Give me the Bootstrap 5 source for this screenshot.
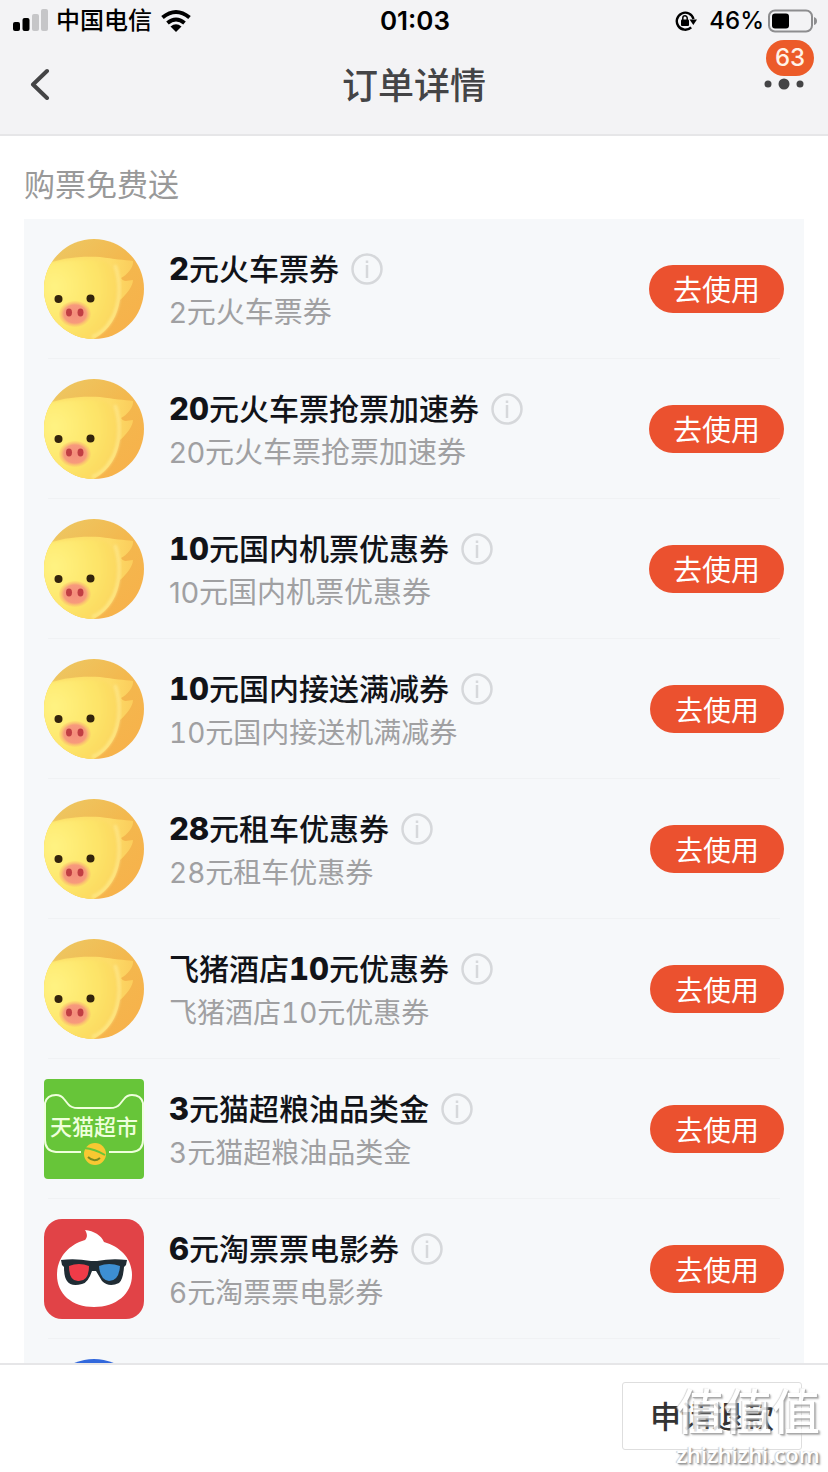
<!DOCTYPE html>
<html lang="zh-CN">
<head>
<meta charset="utf-8">
<meta name="viewport" content="width=device-width, initial-scale=1">
<title>订单详情</title>
<link rel="stylesheet" href="https://cdn.jsdelivr.net/npm/bootstrap@5.3.0/dist/css/bootstrap.min.css">
<style>
body { font-family: Inter, "Noto Sans CJK SC", sans-serif; color: #111318; }
.top-area { background: #f3f3f5; border-bottom: 2px solid #e6e6e8; }
.status-bar { height: 42px; padding: 0 11px 0 13px; font-size: 24px; color: #000; }
.status-bar > * { flex: 1 1 0; font-weight: 500; }
.status-bar .clock { font-size: 26px; line-height: 42px; font-weight: 600; }
.nav-bar { height: 92px; padding: 0 24px 8px; color: #444446; }
.nav-bar h1 { font-size: 36px; font-weight: 500; padding-top: 6px; }
.icon-btn { width: 40px; height: 40px; color: inherit; }
.count-badge { right: -10px; top: -24px; height: 36px; width: 48px; font-size: 24px; font-weight: 500; background: #ec5b29; color: #fff3e8; z-index: 1; }
.content-area { min-height: 0; }
.section-title { font-size: 31px; line-height: 36px; color: #999; padding: 31px 0 16px; }
.coupon-list { background: #f6f8fa; }
.coupon { padding: 20px 20px 0; }
.coupon::after { content: ""; display: block; height: 1px; margin: 19px 4px 0; background: #f0f2f4; }
.coupon-text { padding-top: 4px; }
.coupon h3 { font-size: 30px; line-height: 44px; font-weight: 500; }
.coupon h3 b { font-size: 31px; line-height: 1; font-weight: 800; font-variant-numeric: tabular-nums; }
.coupon p { font-size: 29px; line-height: 44px; color: #a0a0a2; }
.logo { width: 100px; height: 100px; margin-right: 25px; }
.logo text { font-family: "Noto Sans CJK SC", sans-serif; }
.info { width: 32px; height: 32px; margin-left: 12px; }
.use-btn { --bs-btn-bg: #eb512f; --bs-btn-color: #fff; --bs-btn-hover-bg: #d94525; --bs-btn-hover-color: #fff; height: 48px; padding: 4px 24px 0; font-size: 29px; line-height: 44px; border: 0; }
.compact p { font-size: 28px; font-variant-numeric: tabular-nums; }
.compact .use-btn { font-size: 28px; padding: 4px 25px 0; }
.action-bar { height: 109px; border-top: 2px solid #e6e6e8; padding-right: 26px; padding-bottom: 6px; }
.refund-btn { --bs-btn-border-color: #dedede; width: 180px; height: 68px; padding: 4px 0 0; font-size: 31px; font-weight: 500; border-radius: 3px; color: #333; }
.watermark { right: 8px; bottom: 4px; color: #fff; pointer-events: none; text-shadow: 1px 1px 1px #999, 2px 2px 2px #aaa, -1px 0 1px #ccc; }
.watermark-name { font-size: 48px; line-height: 56px; font-weight: 500; opacity: .85; }
.watermark-site { font-family: "Open Sans", sans-serif; font-size: 22px; line-height: 28px; font-weight: 600; }
</style>
</head>
<body class="bg-white">
<svg class="position-absolute" width="0" height="0" aria-hidden="true">
  <defs>
    <linearGradient id="sky" x1="0" y1="0" x2="1" y2="1"><stop offset="0" stop-color="#ecca66"/><stop offset=".5" stop-color="#f3b84e"/><stop offset="1" stop-color="#f8b04a"/></linearGradient>
    <radialGradient id="face" cx=".25" cy=".3" r=".85"><stop offset="0" stop-color="#fff382"/><stop offset=".6" stop-color="#fde468"/><stop offset="1" stop-color="#fbd45e"/></radialGradient>
    <linearGradient id="ear" x1="0" y1="0" x2="1" y2="0"><stop offset="0" stop-color="#fde268"/><stop offset=".75" stop-color="#fddc68"/><stop offset="1" stop-color="#fbcd5c"/></linearGradient>
    <radialGradient id="snout"><stop offset="0" stop-color="#f58d7d"/><stop offset=".7" stop-color="#f79a7c"/><stop offset="1" stop-color="#fbc86a" stop-opacity=".3"/></radialGradient>
    <clipPath id="disc"><circle cx="50" cy="50" r="50"/></clipPath>
    <filter id="soft"><feGaussianBlur stdDeviation="1.5"/></filter>
  </defs>
  <symbol id="pig" viewBox="0 0 100 100">
    <g clip-path="url(#disc)">
      <rect width="100" height="100" fill="url(#sky)"/>
      <path d="M-2 29C10 19 36 17 56 18 70 20 80 21 89 22 90 28 83 36 77 39 80 44 84 41 89 41 89 47 82 56 76 61 73 78 66 92 46 102L-4 102Z" fill="url(#ear)"/>
      <path d="M-10 27C18 20 52 18 63 24 72 30 75 45 72 61 70 79 59 94 44 103L-10 110Z" fill="url(#face)" filter="url(#soft)"/>
      <path d="M71 26C77 42 77 65 68 80 63 89 56 95 48 98" fill="none" stroke="#fff09b" stroke-width="3" opacity=".65" filter="url(#soft)"/>
      <ellipse cx="31" cy="75" rx="16" ry="13" fill="url(#snout)"/>
      <ellipse cx="25" cy="73.500" rx="3" ry="4" fill="#c13e43"/><ellipse cx="36.500" cy="73.500" rx="3" ry="4" fill="#c13e43"/>
      <circle cx="14.500" cy="60" r="4" fill="#33240c"/><circle cx="46.500" cy="59.500" r="4" fill="#33240c"/>
    </g>
  </symbol>
  <symbol id="info" viewBox="0 0 32 32">
    <g fill="none" stroke="#d6d8db" stroke-width="2.500"><circle cx="16" cy="16" r="14.500"/><path d="M16 12V25M16 7.500V10"/></g>
  </symbol>
</svg>

<div class="d-flex flex-column vh-100 overflow-hidden position-relative">
  <header class="top-area flex-shrink-0">
    <div class="status-bar d-flex align-items-center">
      <div class="d-flex align-items-center">
        <svg class="me-2" width="35" height="24" viewBox="0 0 35 24" aria-label="信号"><rect y="13" width="7" height="9" rx="2"/><rect x="9.500" y="9" width="7" height="13" rx="2"/><rect x="19" y="5" width="7" height="17" rx="2" fill="#c6c6c8"/><rect x="28" width="7" height="22" rx="2" fill="#c6c6c8"/></svg>
        <span>中国电信</span>
        <svg class="ms-2" width="32" height="24" viewBox="0 0 32 24" aria-label="无线网络"><g fill="none" stroke="#000" stroke-width="4"><path d="M2.500 8.500Q16-2.500 29.500 8.500"/><path d="M7.500 14Q16 7 24.500 14"/></g><path d="M10.500 17.500Q16 13 21.500 17.500L16 23Z"/></svg>
      </div>
      <div class="clock text-center">01:03</div>
      <div class="d-flex align-items-center justify-content-end">
        <svg width="22" height="22" viewBox="0 0 22 22" aria-label="方向锁定"><path d="M16.200 17.300A8.500 8.500 0 1 1 18.500 9" fill="none" stroke="#000" stroke-width="2.400"/><path d="M14.500 9.500H22L18.300 15Z"/><rect x="6" y="9.500" width="8" height="6.500" rx="1"/><path d="M7.800 10V8a2.200 2.200 0 0 1 4.400 0V10" fill="none" stroke="#000" stroke-width="1.500"/></svg>
        <span class="ms-2 ps-1">46%</span>
        <svg class="ms-1" width="49" height="24" viewBox="0 0 49 24" aria-label="电量"><rect x="1" y="1.500" width="43" height="21" rx="6" fill="none" stroke="#8d8d8f" stroke-width="2"/><rect x="4" y="4.500" width="17" height="15" rx="3"/><path d="M46 8q3 1 3 4t-3 4Z" fill="#8d8d8f"/></svg>
      </div>
    </div>
    <nav class="nav-bar d-flex align-items-center justify-content-between" aria-label="页面导航">
      <button class="btn icon-btn border-0 p-0 d-flex align-items-center" type="button" aria-label="返回">
        <svg width="32" height="32" viewBox="0 0 32 32" fill="none" stroke="currentColor" stroke-width="4" stroke-linecap="round" stroke-linejoin="round"><path d="M23 3 9 16.500 23 30"/></svg>
      </button>
      <h1 class="m-0">订单详情</h1>
      <button class="btn icon-btn border-0 p-0 position-relative d-flex align-items-center justify-content-center" type="button" aria-label="更多，63条消息">
        <svg width="40" height="14" viewBox="0 0 40 14" fill="currentColor"><circle cx="4" cy="7" r="3.500"/><circle cx="20" cy="7" r="5.500"/><circle cx="36" cy="7" r="3.500"/></svg>
        <span class="count-badge position-absolute rounded-pill d-flex align-items-center justify-content-center">63</span>
      </button>
    </nav>
  </header>

  <main class="content-area flex-fill overflow-hidden px-4">
    <h2 class="section-title m-0 fw-normal">购票免费送</h2>
    <ul class="coupon-list list-unstyled m-0">
      <li class="coupon"><div class="d-flex align-items-center"><svg class="logo flex-shrink-0"><use href="#pig"/></svg><div class="coupon-text flex-fill"><div class="d-flex align-items-center"><h3 class="m-0"><b>2</b>元火车票券</h3><svg class="info"><use href="#info"/></svg></div><p class="m-0">2元火车票券</p></div><button type="button" class="btn use-btn rounded-pill">去使用</button></div></li>
      <li class="coupon"><div class="d-flex align-items-center"><svg class="logo flex-shrink-0"><use href="#pig"/></svg><div class="coupon-text flex-fill"><div class="d-flex align-items-center"><h3 class="m-0"><b>20</b>元火车票抢票加速券</h3><svg class="info"><use href="#info"/></svg></div><p class="m-0">20元火车票抢票加速券</p></div><button type="button" class="btn use-btn rounded-pill">去使用</button></div></li>
      <li class="coupon"><div class="d-flex align-items-center"><svg class="logo flex-shrink-0"><use href="#pig"/></svg><div class="coupon-text flex-fill"><div class="d-flex align-items-center"><h3 class="m-0"><b>10</b>元国内机票优惠券</h3><svg class="info"><use href="#info"/></svg></div><p class="m-0">10元国内机票优惠券</p></div><button type="button" class="btn use-btn rounded-pill">去使用</button></div></li>
      <li class="coupon compact"><div class="d-flex align-items-center"><svg class="logo flex-shrink-0"><use href="#pig"/></svg><div class="coupon-text flex-fill"><div class="d-flex align-items-center"><h3 class="m-0"><b>10</b>元国内接送满减券</h3><svg class="info"><use href="#info"/></svg></div><p class="m-0">10元国内接送机满减券</p></div><button type="button" class="btn use-btn rounded-pill">去使用</button></div></li>
      <li class="coupon compact"><div class="d-flex align-items-center"><svg class="logo flex-shrink-0"><use href="#pig"/></svg><div class="coupon-text flex-fill"><div class="d-flex align-items-center"><h3 class="m-0"><b>28</b>元租车优惠券</h3><svg class="info"><use href="#info"/></svg></div><p class="m-0">28元租车优惠券</p></div><button type="button" class="btn use-btn rounded-pill">去使用</button></div></li>
      <li class="coupon compact"><div class="d-flex align-items-center"><svg class="logo flex-shrink-0"><use href="#pig"/></svg><div class="coupon-text flex-fill"><div class="d-flex align-items-center"><h3 class="m-0">飞猪酒店<b>10</b>元优惠券</h3><svg class="info"><use href="#info"/></svg></div><p class="m-0">飞猪酒店10元优惠券</p></div><button type="button" class="btn use-btn rounded-pill">去使用</button></div></li>
      <li class="coupon compact"><div class="d-flex align-items-center">
        <svg class="logo flex-shrink-0" viewBox="0 0 100 100"><rect width="100" height="100" rx="4" fill="#67c539"/><path d="M37 73H12Q1 72 1 61V24Q3 16 12 16 17 16 20 20L24 25Q27 29 34 29H66Q73 29 76 25L80 20Q83 16 88 16 97 16 99 24V61Q99 72 88 73H65" fill="none" stroke="#efffdc" stroke-width="2"/><text x="50" y="56" text-anchor="middle" font-size="22" font-weight="500" fill="#efffdc">天猫超市</text><circle cx="51" cy="75" r="11" fill="#f8c832"/><path d="M40 69Q51 70 61 76" fill="none" stroke="#67c539" stroke-width="2"/><path d="M44 78Q50 84 56 79" fill="none" stroke="#7a8a20" stroke-width="2"/></svg>
        <div class="coupon-text flex-fill"><div class="d-flex align-items-center"><h3 class="m-0"><b>3</b>元猫超粮油品类金</h3><svg class="info"><use href="#info"/></svg></div><p class="m-0">3元猫超粮油品类金</p></div><button type="button" class="btn use-btn rounded-pill">去使用</button></div></li>
      <li class="coupon compact"><div class="d-flex align-items-center">
        <svg class="logo flex-shrink-0" viewBox="0 0 100 100"><rect width="100" height="100" rx="18" fill="#e14347"/><path d="M41 21C44 18 43 14 41 11 50 12 57 16 60 23 77 28 88 40 88 56 88 75 72 88 50 88 28 88 13 75 13 56 13 39 24 26 41 21Z" fill="#fff"/><path d="M17 41Q31 39 47 42H53Q68 39 83 41L82 46 80 48Q79 61 75 64 65 69 58 62L52 52H48Q44 64 38 65 27 68 23 62 20 58 20 48L18 46Z" fill="#202c34"/><path d="M25 47Q35 43 45 47 45 62 35 62 25 63 25 47Z" fill="#ef3b48"/><path d="M55 47Q65 43 76 47 75 62 65 62 56 61 55 47Z" fill="#3d8fd3"/></svg>
        <div class="coupon-text flex-fill"><div class="d-flex align-items-center"><h3 class="m-0"><b>6</b>元淘票票电影券</h3><svg class="info"><use href="#info"/></svg></div><p class="m-0">6元淘票票电影券</p></div><button type="button" class="btn use-btn rounded-pill">去使用</button></div></li>
      <li class="coupon"><svg class="logo" viewBox="0 0 100 100"><circle cx="50" cy="50" r="50" fill="#3268dc"/></svg></li>
    </ul>
  </main>

  <footer class="action-bar flex-shrink-0 bg-white d-flex align-items-center justify-content-end">
    <button type="button" class="btn refund-btn">申请退款</button>
  </footer>
  <div class="watermark position-absolute text-center"><div class="watermark-name">值值值</div><div class="watermark-site">zhizhizhi.com</div></div>
</div>
<script src="https://cdn.jsdelivr.net/npm/bootstrap@5.3.0/dist/js/bootstrap.bundle.min.js"></script>
</body>
</html>
